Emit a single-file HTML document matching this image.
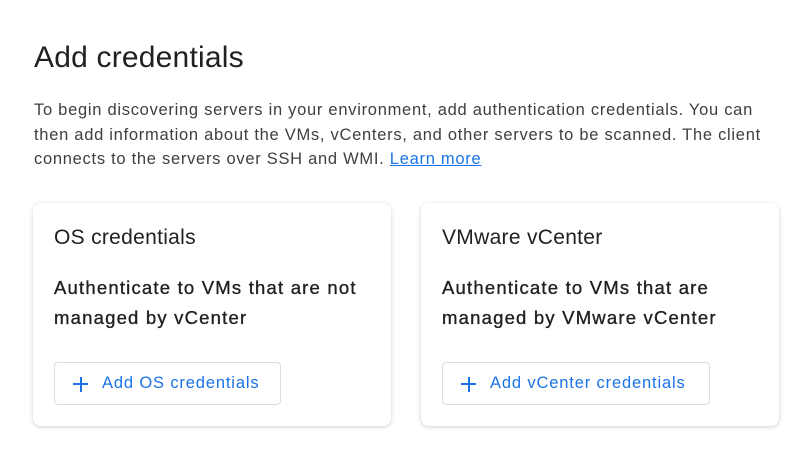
<!DOCTYPE html>
<html><head><style>
body{margin:0;width:800px;height:452px;background:#fff;font-family:"Liberation Sans",Arial,sans-serif;color:#202124;position:relative;overflow:hidden}
h1{position:absolute;left:34px;top:41px;margin:0;font-size:30px;font-weight:400;letter-spacing:0.2px}
p.d{position:absolute;left:34px;top:98px;margin:0;width:770px;font-size:16.5px;line-height:24.5px;color:#3c4043;letter-spacing:0.72px;white-space:nowrap}
a{color:#1a73e8;text-decoration:underline}
.card{position:absolute;top:203px;width:358px;height:223px;border-radius:8px;box-shadow:0 1px 4px rgba(60,64,67,.25);background:#fff}
.t{position:absolute;left:21px;top:23px;font-size:21px;letter-spacing:0.3px}
.b{position:absolute;left:21px;top:70px;font-size:18.5px;line-height:30px;color:#202124;-webkit-text-stroke:0.35px #202124;letter-spacing:1.2px;white-space:nowrap}
.btn{position:absolute;left:21px;top:159px;height:43px;border:1px solid #dadce0;border-radius:4px;color:#1a73e8;font-size:16.5px;line-height:41px;padding:0 0 0 47px;box-sizing:border-box;letter-spacing:0.85px;white-space:nowrap}
.btn:before{content:"";position:absolute;left:18px;top:20px;width:15px;height:2px;background:#1a73e8}
.btn:after{content:"";position:absolute;left:24.5px;top:13.5px;width:2px;height:15px;background:#1a73e8}
</style></head><body>
<h1>Add credentials</h1>
<p class="d">To begin discovering servers in your environment, add authentication credentials. You can<br>then add information about the VMs, vCenters, and other servers to be scanned. The client<br>connects to the servers over SSH and WMI. <a>Learn more</a></p>
<div class="card" style="left:33px"><div class="t">OS credentials</div><div class="b">Authenticate to VMs that are not<br>managed by vCenter</div><div class="btn" style="width:227px">Add OS credentials</div></div>
<div class="card" style="left:421px"><div class="t">VMware vCenter</div><div class="b">Authenticate to VMs that are<br>managed by VMware vCenter</div><div class="btn" style="width:268px">Add vCenter credentials</div></div>
</body></html>
